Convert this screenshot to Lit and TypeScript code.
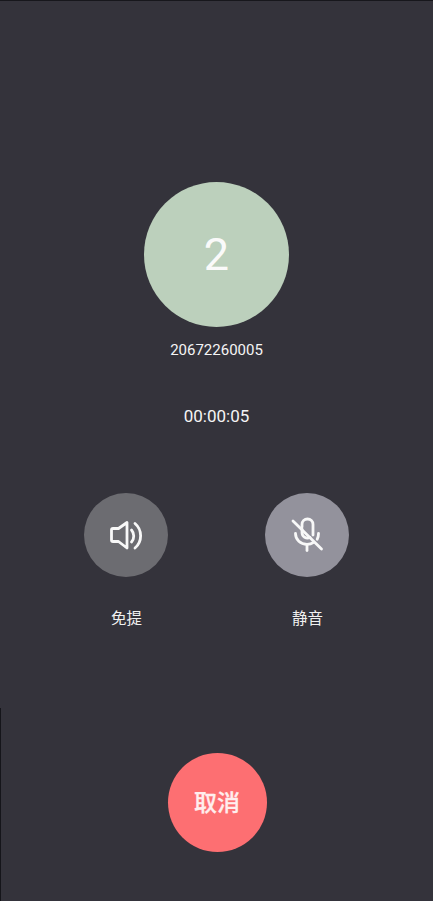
import { LitElement, html, css } from "lit";
import { customElement } from "lit/decorators.js";

@customElement("app-root")
export class AppRoot extends LitElement {
  static styles = css`
    :host {
      display: block;
      width: 433px;
      height: 901px;
      overflow: hidden;
      font-family: Roboto, "Noto Sans CJK SC", sans-serif;
      color: #fff;
    }
    .page {
      position: relative;
      box-sizing: border-box;
      height: 901px;
      background: #34333b;
      border-top: 1px solid #17171c;
      padding-top: 181px;
      display: flex;
      flex-direction: column;
      align-items: center;
    }
    .edge {
      position: absolute;
      left: 0;
      top: 707px;
      bottom: 0;
      width: 1px;
      background: #15151a;
    }
    .avatar {
      width: 145px;
      height: 145px;
      border-radius: 50%;
      background: #bcd0bc;
      display: flex;
      align-items: center;
      justify-content: center;
      font-size: 45px;
      line-height: 1;
      color: #fafafa;
    }
    .number {
      margin-top: 14px;
      font-size: 15px;
      line-height: 18px;
      color: #f5f5f5;
    }
    .timer {
      margin-top: 47px;
      font-size: 17px;
      line-height: 20px;
      color: #f5f5f5;
    }
    .controls {
      margin-top: 67px;
      display: flex;
      gap: 97px;
    }
    .control {
      width: 84px;
      display: flex;
      flex-direction: column;
      align-items: center;
      gap: 31px;
    }
    .circle {
      width: 84px;
      height: 84px;
      border-radius: 50%;
      display: flex;
      align-items: center;
      justify-content: center;
    }
    .speaker { background: #6c6c71; }
    .mute { background: #93929c; }
    .circle svg {
      width: 44px;
      height: 44px;
      fill: none;
      stroke: #f8f8f8;
      stroke-width: 2.8;
      stroke-linecap: round;
      stroke-linejoin: round;
    }
    .label {
      font-size: 15.5px;
      line-height: 22px;
      color: #f0f0f0;
      padding-left: 1px;
    }
    .cancel {
      margin: 123px 0 0 1px;
      width: 99px;
      height: 99px;
      box-sizing: border-box;
      padding-bottom: 3px;
      border-radius: 50%;
      background: #fd6f72;
      display: flex;
      align-items: center;
      justify-content: center;
      font-size: 23px;
      font-weight: 500;
      -webkit-text-stroke: 0.3px #ffeeee;
      color: #ffeeee;
    }
  `;

  render() {
    return html`
      <div class="page">
        <div class="edge"></div>
        <div class="avatar">2</div>
        <div class="number">20672260005</div>
        <div class="timer">00:00:05</div>
        <div class="controls">
          <div class="control">
            <div class="circle speaker">
              <svg viewBox="0 0 44 44">
                <path d="M9 15.500h5.500L23 9.500v25.500L14.500 28.500H9a1.500 1.500 0 0 1-1.500-1.500V17A1.500 1.500 0 0 1 9 15.500z" />
                <path d="M27.500 17c3 3.400 3 8.800 0 12" />
                <path d="M31 10.500c7.500 6.500 7.500 18 0 24.500" />
              </svg>
            </div>
            <div class="label">免提</div>
          </div>
          <div class="control">
            <div class="circle mute">
              <svg viewBox="0 0 44 44">
                <path d="M17 14v-2.500a5.500 5.500 0 0 1 11 0V22" />
                <path d="M17 16v3.500a5.500 5.500 0 0 0 8 4.900" />
                <path d="M10.500 20.500c0 6.300 5 10.800 11.500 10.800 2.600 0 4.800-.7 6.600-2" />
                <path d="M33.500 20.500c0 2.300-.4 4.200-1.300 5.800" />
                <path d="M22 31.500V37.500" />
                <path d="M8 8l28.500 28" />
              </svg>
            </div>
            <div class="label">静音</div>
          </div>
        </div>
        <div class="cancel">取消</div>
      </div>
    `;
  }
}
